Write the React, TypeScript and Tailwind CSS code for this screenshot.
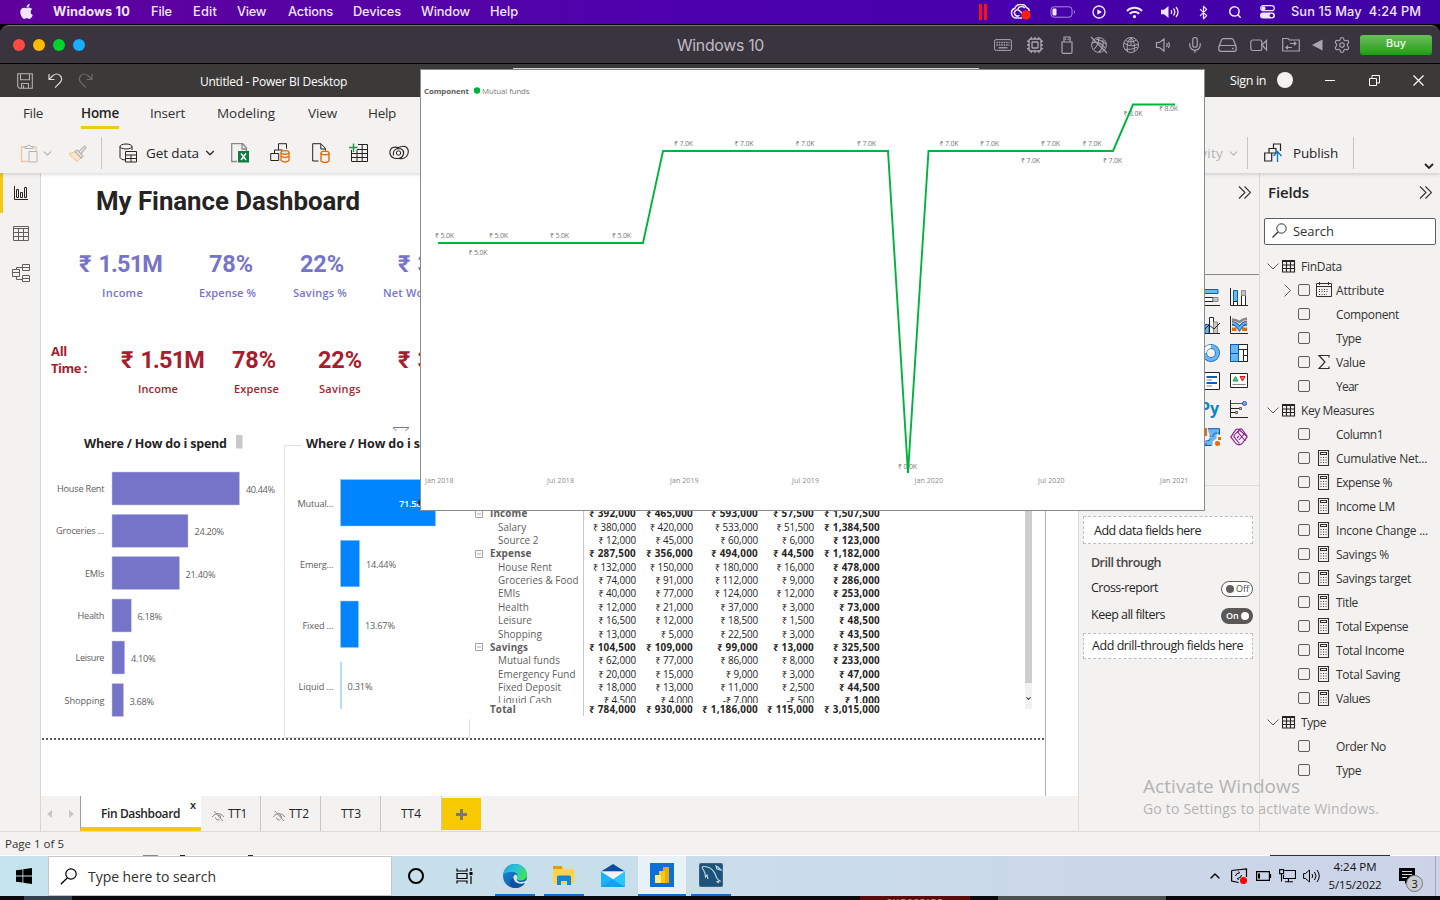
import { useLayoutEffect, useRef, useState, type ReactNode } from "react";
import { FaApple, FaWifi } from "react-icons/fa";
import { Bluetooth, ChevronDown, ChevronUp, Search, Cpu, Mic, Settings } from "lucide-react";

/** Single-line label that spreads its letters to fill the given width. */
function Fit({ w, children, className = "" }: { w: number; children: string; className?: string }) {
  const ref = useRef<HTMLSpanElement>(null);
  const [spacing, setSpacing] = useState(0);
  useLayoutEffect(() => {
    const el = ref.current;
    if (!el) return;
    el.style.letterSpacing = "0px";
    setSpacing((w - el.getBoundingClientRect().width) / children.length);
  }, [w, children]);
  return (
    <span ref={ref} className={"inline-block shrink-0 whitespace-pre " + className} style={{ letterSpacing: spacing + "px" }}>
      {children}
    </span>
  );
}

function Ico({ w, h, className = "", children }: { w: number; h: number; className?: string; children: ReactNode }) {
  return (
    <svg width={w} height={h} viewBox={`0 0 ${w} ${h}`} fill="none" stroke="currentColor" className={"shrink-0 " + className}>
      {children}
    </svg>
  );
}

/* ---------- macOS chrome ---------- */

function MacMenuBar() {
  return (
    <div className="flex h-6 items-center bg-linear-to-r from-[#5f009c] via-[#4c00ae] to-[#3f00a4] font-['Inter',sans-serif] text-[12.800px] font-medium text-[#efe6f8]">
      <FaApple className="mb-px ml-[18px] size-[17px]" />
      <Fit w={77} className="ml-[18px] font-bold">Windows 10</Fit>
      <Fit w={21} className="ml-[21px]">File</Fit>
      <Fit w={24} className="ml-[21px]">Edit</Fit>
      <Fit w={29} className="ml-[20px]">View</Fit>
      <Fit w={45} className="ml-[22px]">Actions</Fit>
      <Fit w={48} className="ml-[20px]">Devices</Fit>
      <Fit w={49} className="ml-[20px]">Window</Fit>
      <Fit w={28} className="ml-[20px]">Help</Fit>
      <div className="ml-auto flex items-center pr-[19px]">
        <div className="flex w-[26px] justify-center gap-[2px]">
          <i className="h-4 w-[3px] bg-[#ff1010]" />
          <i className="h-4 w-[3px] bg-[#ff1010]" />
        </div>
        <div className="flex w-[50px] justify-center">
          <Ico w={22} h={16}>
            <path d="M12 14H6.500A5 5 0 0 1 4.800 4.300 6.500 6.500 0 0 1 16.500 3.500Q19 4.500 19.500 7" strokeWidth="1.500" />
            <path d="M9.500 11.200A3 3 0 1 1 9.200 6.500l4.300 4M7.800 5.200a4 4 0 0 1 7-1.200" strokeWidth="1.500" />
            <circle cx="16" cy="11" r="4.700" fill="#ff2010" stroke="none" />
          </Ico>
        </div>
        <div className="flex w-[34px] justify-center">
          <Ico w={26} h={12}>
            <rect x="1" y=".8" width="21" height="10.400" rx="3" stroke="#a58ad6" />
            <rect x="2.500" y="2.400" width="4" height="7.200" rx="1" fill="currentColor" stroke="none" />
            <path d="M24 4.500q1.500 1.500 0 3" stroke="#a58ad6" />
          </Ico>
        </div>
        <div className="flex w-[38px] justify-center">
          <Ico w={14} h={14}>
            <circle cx="7" cy="7" r="6" strokeWidth="1.400" />
            <path d="M5.300 4.200v5.600L10 7z" fill="currentColor" stroke="none" />
          </Ico>
        </div>
        <div className="flex w-[32px] justify-center"><FaWifi className="h-[13px] w-[17px]" /></div>
        <div className="flex w-[40px] justify-center">
          <Ico w={20} h={14}>
            <path d="M1 4.800h3L8.500 1v12L4 9.200H1z" fill="currentColor" stroke="none" />
            <path d="M11 5q1.400 2 0 4M13.500 3.500q2.600 3.500 0 7M16 2q4 5 0 10" strokeWidth="1.300" />
          </Ico>
        </div>
        <div className="flex w-[26px] justify-center"><Bluetooth className="size-[15px]" strokeWidth={2} /></div>
        <div className="flex w-[38px] justify-center"><Search className="size-[14px]" strokeWidth={2.600} /></div>
        <div className="flex w-[26px] justify-center">
          <Ico w={15} h={14}>
            <rect x=".7" y=".7" width="13.600" height="5" rx="2.500" strokeWidth="1.200" />
            <circle cx="3.500" cy="3.200" r="2" fill="currentColor" stroke="none" />
            <rect x="0" y="7.500" width="15" height="6" rx="3" fill="currentColor" stroke="none" />
            <circle cx="11.500" cy="10.500" r="1.800" fill="#4300a8" stroke="none" />
          </Ico>
        </div>
        <Fit w={130} className="ml-[11px]">{"Sun 15 May  4:24 PM"}</Fit>
      </div>
    </div>
  );
}

function VmTitleBar() {
  return (
    <div className="bg-black py-px">
      <div className="flex h-[38px] items-center rounded-t-[9px] border-t border-[#77727c] bg-[#3a343f] text-[#aaa4ae]">
        <div className="ml-[13px] flex w-[646px] gap-2">
          <i className="size-3 rounded-full bg-[#ff4a43]" />
          <i className="size-3 rounded-full bg-[#ffb900]" />
          <i className="size-3 rounded-full bg-[#00d32b]" />
          <i className="size-3 rounded-full bg-[#19adff]" />
        </div>
        <Fit w={87} className="mt-[2px] ml-[18px] font-['Inter',sans-serif] text-[15.800px] text-[#c0bcc3]">Windows 10</Fit>
        <div className="ml-auto flex items-center pr-2">
          <div className="flex w-8 justify-center">
            <Ico w={18} h={12}>
              <rect x=".6" y=".6" width="16.800" height="10.800" rx="1.500" />
              <path d="M2.500 3.500h13M2.500 6h13" strokeDasharray="1.500 .9" strokeWidth="1.300" /><path d="M4.500 8.800h9" strokeWidth="1.300" />
            </Ico>
          </div>
          <div className="flex w-8 justify-center"><Cpu className="size-[18px]" strokeWidth={1.800} /></div>
          <div className="flex w-8 justify-center">
            <Ico w={12} h={18}>
              <path d="M3 6V1h6v5M1 6h10v10q0 1.300-1.300 1.300H2.300Q1 17.300 1 16zM4.700 2.500v1.500M7.300 2.500v1.500" strokeWidth="1.200" />
            </Ico>
          </div>
          <div className="flex w-8 justify-center">
            <Ico w={18} h={18}>
              <circle cx="9" cy="9" r="7.400" />
              <path d="M1 1l16 16M4 13Q8 10 9 2M9 16q5-4 4-12M2 7q7-3 13 5M6 3q7 2 10 5" strokeWidth="1.100" />
            </Ico>
          </div>
          <div className="flex w-8 justify-center">
            <Ico w={18} h={18}>
              <circle cx="9" cy="9" r="7.500" />
              <path d="M9 1.500Q4 6 5.500 15.500M9 1.500Q14 7 12 16M9 1.500V9M2 7q7 5 14.500 1M3 13.500Q10 14 15.500 11M3.500 4.500Q9 7.500 14.500 4" strokeWidth="1" />
            </Ico>
          </div>
          <div className="flex w-8 justify-center">
            <Ico w={16} h={14}>
              <path d="M1.500 4.500H4.500L9 1v12L4.500 9.500h-3zM11.500 5q1.500 2 0 4M13.500 4q1.500 3 0 6" strokeWidth="1.200" />
            </Ico>
          </div>
          <div className="flex w-8 justify-center"><Mic className="size-[18px]" strokeWidth={1.600} /></div>
          <div className="flex w-8 justify-center">
            <Ico w={19} h={14}>
              <path d="M1 8.500L3.500 2Q4 .700 5.500.700h8q1.500 0 2 1.300L18 8.500" strokeWidth="1.200" />
              <rect x=".8" y="7.500" width="17.400" height="5.800" rx="2" strokeWidth="1.200" /><path d="M14 10.500h1.500" strokeWidth="1.500" />
            </Ico>
          </div>
          <div className="flex w-8 justify-center">
            <Ico w={18} h={14}>
              <rect x=".8" y="2" width="11" height="10.500" rx="2" strokeWidth="1.200" />
              <path d="M12 7l4.500-4.500v9.500z" strokeWidth="1.200" />
            </Ico>
          </div>
          <div className="flex w-8 justify-center">
            <Ico w={18} h={15}>
              <path d="M.7 13V1.500h5.500l1.300 1.500h9.800v11H.7z" strokeWidth="1.200" />
              <path d="M8 6.500h5.500M12 4.700l2 1.800-2 1.800M10 10.500H4.500M6 8.700l-2 1.800 2 1.800" strokeWidth="1.200" />
            </Ico>
          </div>
          <div className="flex w-5 justify-center">
            <Ico w={11} h={12}><path d="M10.500 .5v11L0 6z" fill="currentColor" stroke="none" /></Ico>
          </div>
          <div className="flex w-[30px] justify-center"><Settings className="size-[18px]" strokeWidth={1.500} /></div>
          <div className="ml-[3px] flex h-5 w-[72px] items-center justify-center rounded-[3px] bg-linear-to-b from-[#69bf59] to-[#1a9d0c] pb-[3px] font-['Inter',sans-serif] text-[11px] font-medium text-[#eefbe9]">Buy</div>
        </div>
      </div>
    </div>
  );
}

/* ---------- Power BI window ---------- */

function WindowTitle() {
  return (
    <div className="flex h-[33px] items-center bg-[#3b3a39] text-[12px] text-white">
      <Ico w={16} h={16} className="ml-[17px] text-[#b5b3b2]">
        <path d="M.7.700h14.600v14.600H2.500L.7 13.500zM3.500.700v6h9v-6M4.500 15v-4.500h7V15M6.500 12.500V15" strokeWidth="1.100" />
      </Ico>
      <Ico w={15} h={16} className="ml-[15px] text-[#d8d6d5]">
        <path d="M1 1v5.500h5.500M1.200 6.200L5 2.500q4-3 7 0t.5 6.500L7 14.700" strokeWidth="1.200" />
      </Ico>
      <Ico w={15} h={16} className="ml-[15px] text-[#6b6a69]">
        <path d="M14 1v5.500H8.500M13.800 6.200L10 2.500q-4-3-7 0T2.500 9L8 14.700" strokeWidth="1.200" />
      </Ico>
      <Fit w={147} className="mt-[2px] ml-[107px]">Untitled - Power BI Desktop</Fit>
      <div className="ml-auto flex items-center">
        <Fit w={36} className="mt-px mr-[11px] text-[12.500px]">Sign in</Fit>
        <i className="-mt-px size-4 rounded-full bg-[#f3f2f1]" />
        <i className="ml-8 h-px w-[10px] bg-white" />
        <Ico w={11} h={11} className="ml-[34px]"><path d="M.5 3.500h7v7h-7zM3 3V.500h7.500V8H8" /></Ico>
        <Ico w={11} h={11} className="mr-[16px] ml-[33px]"><path d="M.5.500l10 10M10.500.500l-10 10" strokeWidth="1.200" /></Ico>
      </div>
    </div>
  );
}

function Ribbon() {
  return (
    <div className="relative z-10 h-[76px] bg-[#f3f2f1] shadow-[0_1px_4px_rgba(0,0,0,0.18)]">
      <div className="flex h-8 items-center text-[13.500px] text-[#323130]">
        <Fit w={20} className="ml-[23px]">File</Fit>
        <div className="ml-[38px] flex h-8 items-center border-b-[3px] border-[#f2c811] pt-[3px] font-semibold text-[#252423]"><Fit w={38}>Home</Fit></div>
        <Fit w={35} className="ml-[31px]">Insert</Fit>
        <Fit w={58} className="ml-[32px]">Modeling</Fit>
        <Fit w={29} className="ml-[33px]">View</Fit>
        <Fit w={28} className="ml-[31px]">Help</Fit>
      </div>
      <div className="flex h-[44px] items-center pt-1 text-[13.500px] text-[#252423]">
        <Ico w={18} h={19} className="ml-[20px] text-[#b5b3b2]">
          <path d="M5 3H1.500v14.500H8M13 3h3v4" stroke="#f0c69a" strokeWidth="1.300" />
          <path d="M5 4.500V2.500h2Q9-.500 11 2.500h2v2zM9 7.500h8v10.500H9z" fill="#f3f2f1" />
        </Ico>
        <ChevronDown className="ml-[3px] size-[13px] text-[#b5b3b2]" strokeWidth={2} />
        <Ico w={19} h={17} className="ml-[14px] text-[#b5b3b2]">
          <path d="M1 8.500l6-1.500 6 6-4 3.500Q5 14 1 8.500z" fill="#fbe3cb" stroke="#f0c69a" />
          <path d="M7 6.500l2-1.500 6 6-1.500 2zM11 6.500L16.500 1 18 2.500 13 8.500" fill="#f3f2f1" strokeWidth="1.200" />
        </Ico>
        <i className="ml-[14px] h-8 w-px bg-[#c8c6c4]" />
        <Ico w={18} h={20} className="ml-[17px]">
          <ellipse cx="7" cy="3.500" rx="6" ry="2.500" />
          <path d="M1 3.500v11Q2 17 6 17M13 3.500V7M6.500 8.500h11v10.500h-11zM6.500 12h11M6.500 15.500h11M12 12v7" />
        </Ico>
        <Fit w={53} className="ml-[9px]">Get data</Fit>
        <ChevronDown className="ml-[4px] size-[14px]" strokeWidth={2} />
        <Ico w={18} h={20} className="ml-[14px] text-[#8a8886]">
          <path d="M6 18.500H.7V.700h11L15.500 5v3M11 1v5h4.500" strokeWidth="1.300" />
          <path d="M7 8h11v11.500H7z" fill="#107c41" stroke="none" />
          <path d="M10 10.500l5 6.500M15 10.500l-5 6.500" stroke="#fff" strokeWidth="1.500" />
        </Ico>
        <Ico w={20} h={20} className="ml-[21px]">
          <path d="M8.500 7V.700h8v5M.7 10.500h8v7h-8zM4.500 10.500v-3.500h8" />
          <ellipse cx="15" cy="9.500" rx="4" ry="1.800" fill="#fbe3cb" stroke="#e66c00" strokeWidth="1.300" />
          <path d="M11 9.500v8q4 3 8 0v-8M11 13q4 3 8 0" stroke="#e66c00" strokeWidth="1.300" />
        </Ico>
        <Ico w={18} h={20} className="ml-[22px]">
          <path d="M6.500 18H.7V.700H9L13.500 5.500v2M8.800 1v5h4.700" />
          <ellipse cx="13" cy="10" rx="4" ry="1.800" fill="#fff" stroke="#e66c00" strokeWidth="1.400" />
          <path d="M9 10v8q4 3 8 0v-8" stroke="#e66c00" strokeWidth="1.400" />
        </Ico>
        <Ico w={20} h={20} className="ml-[19px]">
          <path d="M2.500 7v11.500h16V1.500H9M8 6.500h10.500M2.500 10.500h16M2.500 14.500h16M8 7v11.500M13.200 1.500v17" />
          <path d="M0 4.500h8.500M4.500.500V9" stroke="#159a4c" strokeWidth="1.400" />
        </Ico>
        <Ico w={20} h={18} className="ml-[20px]">
          <circle cx="9.500" cy="9" r="2.200" />
          <path d="M4.500 11.500Q3.500 5 9.500 4.500q5 0 5 4.500 0 5-5.500 5.500Q3 15 1.200 10.500 0 5 4 3.500q3-1 5.500.500M14.500 6.500Q15.500 13 10 14.500q5 1 7.500-2T19 5.500Q17.500 1.500 13 2.500 9.500 2.800 7.500 4.800" strokeWidth="1.100" />
        </Ico>
        <div className="ml-auto flex items-center">
          <Fit w={66} className="text-[#b5b3b2]">Sensitivity</Fit>
          <ChevronDown className="ml-[4px] size-[13px] text-[#b5b3b2]" strokeWidth={2} />
          <i className="ml-[7px] h-8 w-px bg-[#c8c6c4]" />
          <Ico w={19} h={20} className="ml-[16px]">
            <path d="M9.500 5V1h7v7M5 10V5.500h7V10M.7 10h7v8h-7zM7.700 10h4" strokeWidth="1.200" />
            <path d="M13.500 19V9M9.500 13l4-4.500 4 4.500" stroke="#0f7abf" strokeWidth="1.400" />
          </Ico>
          <Fit w={45} className="ml-[10px]">Publish</Fit>
          <i className="ml-[15px] h-8 w-px bg-[#c8c6c4]" />
          <Ico w={10} h={7} className="mt-[26px] mr-[6px] ml-[70px]"><path d="M1 1l4 4 4-4" strokeWidth="1.800" /></Ico>
        </div>
      </div>
    </div>
  );
}

function GridIcon({ className = "" }: { className?: string }) {
  return <Ico w={16} h={15} className={className}><path d="M.500.500h15v14H.500zM.500 2.500h15M.500 6.500h15M.500 10.500h15M5.500 2.500v12M10.500 2.500v12" /></Ico>;
}

function ViewRail() {
  return (
    <div className="flex w-[41px] shrink-0 flex-col border-r border-[#d8d6d4] bg-[#f3f2f1] text-[#605e5c]">
      <div className="flex h-10 items-center border-l-[3px] border-[#f2c811] pl-[11px] text-[#252423]">
        <Ico w={14} h={14}><path d="M.5 0v13.500H14M2.500 3.500v8h2v-8zM6.500 6.500v5h2v-5zM10.500 1.500v10h2v-10z" /></Ico>
      </div>
      <div className="flex h-10 items-center pl-[13px]"><GridIcon /></div>
      <div className="flex h-10 items-center pl-3">
        <Ico w={18} h={18}><path d="M.5 5.500h7v7h-7zM.5 8.500h7M10.500.500h7v6h-7zM10.500 3.500h7M10.500 11.500h7v6h-7zM10.500 14.500h7M4.500 5.500v-2h6M4.500 12.500v3h6" /></Ico>
      </div>
    </div>
  );
}

const spend = [
  { label: "House Rent", lx: 57, y: 472, w: 127.500, value: "40.44%", vx: 246, vw: 29 },
  { label: "Groceries ...", lx: 56, y: 514.300, w: 76, value: "24.20%", vx: 194.500, vw: 29.500 },
  { label: "EMIs", lx: 85, y: 556.500, w: 67.500, value: "21.40%", vx: 185.500, vw: 30 },
  { label: "Health", lx: 77.500, y: 599, w: 19.300, value: "6.18%", vx: 137.500, vw: 24.500 },
  { label: "Leisure", lx: 75.500, y: 641, w: 12.700, value: "4.10%", vx: 131, vw: 24.500 },
  { label: "Shopping", lx: 64.500, y: 683.500, w: 11.500, value: "3.68%", vx: 129.500, vw: 24.500 },
];

function SpendChart() {
  return (
    <svg width="243" height="314" viewBox="41 425 243 314" className="shrink-0 text-[9.200px]">
      <text x="84" y="448" textLength="143" className="fill-[#252423] text-[12.500px] font-bold">Where / How do i spend</text>
      <rect x="236" y="435" width="6.500" height="13.500" fill="#c8c8c8" />
      {spend.map((d) => (
        <g key={d.label}>
          <text x={d.lx} y={d.y + 20} textLength={104.500 - d.lx} fill="#605e5c">{d.label}</text>
          <rect x="112" y={d.y} width={d.w} height="33" fill="#7674c9" stroke="#c9c8ec" strokeWidth=".5" />
          <text x={d.vx} y={d.y + 21} textLength={d.vw} fill="#605e5c">{d.value}</text>
        </g>
      ))}
    </svg>
  );
}

const save = [
  { label: "Mutual...", lx: 297.500, y: 479.500, w: 95, value: "71.58%", vx: 399, vw: 30, fill: "#fff" },
  { label: "Emerg...", lx: 300, y: 540.300, w: 19, value: "14.44%", vx: 366, vw: 30, fill: "#605e5c" },
  { label: "Fixed ...", lx: 302.500, y: 601, w: 18, value: "13.67%", vx: 365, vw: 30, fill: "#605e5c" },
  { label: "Liquid ...", lx: 298.500, y: 662, w: 1, value: "0.31%", vx: 347.500, vw: 25, fill: "#605e5c" },
];

function SaveChart() {
  return (
    <svg width="191" height="314" viewBox="284 425 191 314" className="shrink-0 text-[9.200px]">
      <path d="M302 445.500H284.500V737.500H469.500V719" fill="none" stroke="#e1e1e1" />
      <path d="M393 427.500h16M393.500 428l3 3M408.500 428l-3 3" fill="none" stroke="#7f6d9a" />
      <text x="306" y="448" textLength="145" className="fill-[#252423] text-[12.500px] font-bold">Where / How do i spend</text>
      {save.map((d) => (
        <g key={d.label}>
          <text x={d.lx} y={d.y + 27.500} textLength={333.500 - d.lx} fill="#605e5c">{d.label}</text>
          <rect x="340.500" y={d.y} width={d.w} height="46.500" fill={d.w > 1 ? "#0085ff" : "#99ceff"} stroke="#99ceff" strokeWidth=".5" />
          <text x={d.vx} y={d.y + 27.500} textLength={d.vw} fill={d.fill} fontWeight={d.w > 90 ? 600 : 400}>{d.value}</text>
        </g>
      ))}
      <path d="M416.500 502.500l4.500-4v8z" fill="#3b3a39" />
    </svg>
  );
}

const matrix: { name: string; group?: boolean; v: string[] }[] = [
  { name: "Income", group: true, v: ["₹ 392,000", "₹ 465,000", "₹ 593,000", "₹ 57,500", "₹ 1,507,500"] },
  { name: "Salary", v: ["₹ 380,000", "₹ 420,000", "₹ 533,000", "₹ 51,500", "₹ 1,384,500"] },
  { name: "Source 2", v: ["₹ 12,000", "₹ 45,000", "₹ 60,000", "₹ 6,000", "₹ 123,000"] },
  { name: "Expense", group: true, v: ["₹ 287,500", "₹ 356,000", "₹ 494,000", "₹ 44,500", "₹ 1,182,000"] },
  { name: "House Rent", v: ["₹ 132,000", "₹ 150,000", "₹ 180,000", "₹ 16,000", "₹ 478,000"] },
  { name: "Groceries & Food", v: ["₹ 74,000", "₹ 91,000", "₹ 112,000", "₹ 9,000", "₹ 286,000"] },
  { name: "EMIs", v: ["₹ 40,000", "₹ 77,000", "₹ 124,000", "₹ 12,000", "₹ 253,000"] },
  { name: "Health", v: ["₹ 12,000", "₹ 21,000", "₹ 37,000", "₹ 3,000", "₹ 73,000"] },
  { name: "Leisure", v: ["₹ 16,500", "₹ 12,000", "₹ 18,500", "₹ 1,500", "₹ 48,500"] },
  { name: "Shopping", v: ["₹ 13,000", "₹ 5,000", "₹ 22,500", "₹ 3,000", "₹ 43,500"] },
  { name: "Savings", group: true, v: ["₹ 104,500", "₹ 109,000", "₹ 99,000", "₹ 13,000", "₹ 325,500"] },
  { name: "Mutual funds", v: ["₹ 62,000", "₹ 77,000", "₹ 86,000", "₹ 8,000", "₹ 233,000"] },
  { name: "Emergency Fund", v: ["₹ 20,000", "₹ 15,000", "₹ 9,000", "₹ 3,000", "₹ 47,000"] },
  { name: "Fixed Deposit", v: ["₹ 18,000", "₹ 13,000", "₹ 11,000", "₹ 2,500", "₹ 44,500"] },
  { name: "Liquid Cash", v: ["₹ 4,500", "₹ 4,000", "-₹ 7,000", "-₹ 500", "₹ 1,000"] },
];

function MatrixRow({ name, group, total, v }: { name: string; group?: boolean; total?: boolean; v: string[] }) {
  const strong = group || total;
  return (
    <div className="grid h-[13.380px] grid-cols-[108px_53px_57px_65px_56px_66px] items-center leading-[13px] text-[#252423]">
      <div className={"flex items-center whitespace-nowrap text-[#605e5c] " + (group ? "" : total ? "pl-[15px]" : "pl-[23px]")}>
        {group && <Ico w={8} h={8} className="mr-[7px] text-[#a6a4a2]"><path d="M.5.500h7v7h-7zM2 4h4" /></Ico>}
        <span className={strong ? "font-bold tracking-[0.150px]" : "tracking-[0.060px]"}>{name}</span>
      </div>
      {v.map((c, i) => (
        <span key={i} className={"whitespace-nowrap text-right " + (strong || i === 4 ? "font-bold tracking-[0.230px]" : "tracking-[-0.150px]")}>{c}</span>
      ))}
    </div>
  );
}

function Matrix() {
  return (
    <div className="flex w-[570px] shrink-0 pt-[82px] text-[9.900px]">
      <div className="relative w-[550px]">
        <div className="h-[196px] overflow-hidden">
          {matrix.map((r) => <MatrixRow key={r.name} {...r} />)}
        </div>
        <MatrixRow name="Total" total v={["₹ 784,000", "₹ 930,000", "₹ 1,186,000", "₹ 115,000", "₹ 3,015,000"]} />
        <i className="absolute top-0 left-[108px] h-[209px] w-px bg-[#c8c8c8]" />
      </div>
      <div className="flex h-[202px] w-[7px] flex-col items-center justify-between bg-[#f1f1f1]">
        <i className="h-[176px] w-full bg-[#cdcdcd]" />
        <ChevronDown className="mb-[7px] size-[7px] text-[#505050]" strokeWidth={4} />
      </div>
    </div>
  );
}

function Canvas() {
  return (
    <div className="flex h-[623px] bg-white">
      <div className="flex w-[1005px] flex-col border-r border-[#b3b0ad]">
        <div className="flex h-[57px] items-center font-['Roboto',sans-serif] text-[25.800px] font-bold text-[#252423]"><Fit w={264} className="ml-[55px]">My Finance Dashboard</Fit></div>
        <div className="mt-[21px] flex h-7 items-center font-['Roboto','Noto_Sans',sans-serif] text-[23.500px] font-bold text-[#7674c9]">
          <Fit w={83} className="ml-[38px] [word-spacing:3px]">₹ 1.51M</Fit>
          <Fit w={44} className="ml-[47px]">78%</Fit>
          <Fit w={44} className="ml-[47px]">22%</Fit>
          <Fit w={83} className="ml-[54px] [word-spacing:3px]">₹ 3.25M</Fit>
        </div>
        <div className="mt-[6px] flex h-4 items-center text-[11px] font-semibold text-[#7674c9]">
          <Fit w={41} className="ml-[61px]">Income</Fit>
          <Fit w={57} className="ml-[56px]">Expense %</Fit>
          <Fit w={54} className="ml-[37px]">Savings %</Fit>
          <Fit w={57} className="ml-[36px]">Net Worth</Fit>
        </div>
        <div className="mt-10 flex h-[63px] text-[#a61e2e]">
          <div className="ml-[10px] w-[70px] text-[13px] leading-[17px] font-bold"><Fit w={16} className="mt-[2px]">All</Fit><br /><Fit w={36}>Time :</Fit></div>
          <div>
            <div className="mt-[6px] flex h-7 items-center font-['Roboto','Noto_Sans',sans-serif] text-[23.500px] font-bold">
              <Fit w={83} className="[word-spacing:3px]">₹ 1.51M</Fit>
              <Fit w={44} className="ml-[28px]">78%</Fit>
              <Fit w={44} className="ml-[42px]">22%</Fit>
              <Fit w={83} className="ml-[36px] [word-spacing:3px]">₹ 3.25M</Fit>
            </div>
            <div className="mt-[6px] flex h-4 items-center text-[11px] font-semibold">
              <Fit w={40} className="ml-[17px]">Income</Fit>
              <Fit w={45} className="ml-[56px]">Expense</Fit>
              <Fit w={42} className="ml-[40px]">Savings</Fit>
            </div>
          </div>
        </div>
        <div className="mt-[21px] flex h-[313px]">
          <SpendChart />
          <SaveChart />
          <Matrix />
        </div>
        <div className="ml-px h-[2px] w-[1002px] bg-[repeating-linear-gradient(90deg,#5a5a5a_0_2px,transparent_2px_4px)]" />
      </div>
    </div>
  );
}

function HiddenEye() {
  return <Ico w={14} h={12} className="mt-1 mr-[3px] text-[#8a8886]"><path d="M1 7Q7 0 13 7M3 1l9 10M4.500 7.500a2.500 2.500 0 0 0 4 2M9.500 8a2.500 2.500 0 0 0-2-3" /></Ico>;
}

function PageTabs() {
  return (
    <div className="flex h-[35px] bg-[#f3f2f1] text-[12px] text-[#252423]">
      <div className="flex w-[39px] items-center gap-[17px] pl-[6px] text-[#c8c6c4]">
        <Ico w={5} h={8}><path d="M5 0v8L0 4z" fill="currentColor" stroke="none" /></Ico>
        <Ico w={5} h={8}><path d="M0 0v8l5-4z" fill="currentColor" stroke="none" /></Ico>
      </div>
      <div className="flex w-[121px] border-b-4 border-l border-b-[#f2c811] border-l-[#a19f9d] bg-white pt-[9px] pl-5 font-semibold">
        <Fit w={79}>Fin Dashboard</Fit>
        <span className="-mt-[8px] ml-[10px] text-[11px]">x</span>
      </div>
      <div className="flex w-[60px] items-center border-r border-[#c8c6c4] pl-[10px]"><HiddenEye /><Fit w={19}>TT1</Fit></div>
      <div className="flex w-[60px] items-center border-r border-[#c8c6c4] pl-[11px]"><HiddenEye /><Fit w={20}>TT2</Fit></div>
      <div className="flex w-[60px] items-center border-r border-[#c8c6c4] pl-5"><Fit w={20}>TT3</Fit></div>
      <div className="flex w-[61px] items-center border-r border-[#c8c6c4] pl-5"><Fit w={20}>TT4</Fit></div>
      <div className="mt-[2px] flex h-8 w-[39px] items-center justify-center bg-[#f6c900] text-[#7a7775]">
        <Ico w={11} h={11}><path d="M5.500 0v11M0 5.500h11" strokeWidth="3" /></Ico>
      </div>
    </div>
  );
}

const vizIcons: ReactNode[] = [
  <><path d="M0 1.500h16v4H0z" fill="#6cb6f0" stroke="#0a5fb5" /><path d="M0 9.500h11v4H0z" fill="#fff" /><path d="M11 9.500h5v4h-5z" fill="#c8c6c4" stroke="#8a8886" /><path d="M0 17.500h18" /></>,
  <><path d="M3.500 2.500h4v11h-4z" fill="#6cb6f0" stroke="#0a5fb5" /><path d="M3.500 13.500h4v4h-4zM11.500 7.500h4v10h-4z" fill="#fff" /><path d="M11.500 2.500h4v5h-4z" fill="#c8c6c4" stroke="#8a8886" /><path d="M.5 0v17.500H18" /></>,
  <><path d="M3 8.500h4v9H3z" fill="#6cb6f0" stroke="#0a5fb5" /><path d="M7.500 1.500h4v16h-4z" fill="#fff" /><path d="M11.500 6h4v11.500h-4z" fill="#c8c6c4" stroke="#8a8886" /><path d="M3 13l4-4 5 4 6-6M0 17.500h18" /></>,
  <><path d="M2 8h3v2H2zM2 11.500h4.500V15H2zM14 8h3v2h-3zM12 11.500h5V15h-5z" fill="#e66c00" stroke="none" /><path d="M2 3.500q4 0 7.500 2.500Q13 3 17 2.500" stroke="#8a8886" strokeWidth="2.500" /><path d="M2 7q4 0 7.500 5.500Q13 7 17 6.500" stroke="#0a5fb5" strokeWidth="3.800" /><path d="M2 7q4 0 7.500 5.500Q13 7 17 6.500" stroke="#6cb6f0" strokeWidth="1.800" /><path d="M.5 0v17.500H18" /></>,
  <><circle cx="9" cy="9" r="6.500" stroke="#0a5fb5" strokeWidth="5" /><circle cx="9" cy="9" r="6.500" stroke="#6cb6f0" strokeWidth="3.500" /><path d="M9 2.500A6.500 6.500 0 0 0 2.500 9" stroke="#fff" strokeWidth="3.500" /></>,
  <><path d="M.5.500h17v17H.5z" fill="#fff" /><path d="M.5.500h8v9h-8zM.5 9.500h8v8h-8z" fill="#6cb6f0" stroke="#0a5fb5" /><path d="M8.500.500h9v17h-9M8.500 5.500h9M13.500 5.500v12M13.500 11.500h4" /></>,
  <><path d="M0 .500h17.500v17H0z" fill="#fff" /><path d="M4.500 5H15M4.500 11H15" stroke="#0a5fb5" strokeWidth="1.800" /><path d="M4.500 8H10M4.500 14H10" stroke="#8a8886" /></>,
  <><path d="M.5 1.500h17v14H.5z" fill="#fff" /><path d="M3 9l2.500-4.500L8 9z" fill="#6fc493" stroke="#159a4c" /><path d="M10 4.500h5L12.500 9z" fill="#f26d6d" stroke="#d11" /><path d="M2.500 12.500h13" stroke="#8a8886" /></>,
  <text x="-2" y="14" fill="#0f86c5" stroke="none" className="text-[16px] font-bold">Py</text>,
  <><path d="M.5 0v17.500H18M1 8.500h8M1 12.500h5" /><path d="M1 3.500h12" stroke="#0a5fb5" /><circle cx="14.500" cy="3.500" r="2" fill="#6cb6f0" stroke="#0a5fb5" /><path d="M9.500 7.500h2v2h-2zM5.500 11.500h2v2h-2z" fill="#c8c6c4" stroke="#605e5c" /></>,
  <><path d="M0 0h5v8H0z" fill="#e66c00" stroke="none" /><path d="M5.500.500h12v6h-3v4l-4 3v4H1l5-6h3z" fill="#6cb6f0" stroke="none" /><path d="M6 .700h11.500v6M.500 17.500h9" stroke="#0a5fb5" /><path d="M4 17v-4.500h4V8h4V5h5" stroke="#0a5fb5" strokeDasharray="2 1" /><circle cx="15.500" cy="15.500" r="2.500" fill="#e66c00" stroke="none" /><path d="M16 9h3v3h-3z" fill="#e66c00" stroke="none" /></>,
  <><path d="M6 1.500q1.500-1 3 0L16.500 8q1 1 0 2l-4 5q-1.500 2-3.500 1.500-2 .5-3.500-1.500l-4-5q-1-1 0-2z" stroke="#8f1a94" strokeWidth="1.200" /><path d="M9 1.500q2-1.500 3.500.500l4.500 6M9 2l-4.500 5q-1.200 1.500 0 2.500l5 6M9 3l-1 1.500 7.500 8.500M14.500 5.500L9 12M9 8l-2 2" stroke="#8f1a94" strokeWidth="1.100" /></>,
];

function DoubleChevron() {
  return <Ico w={13} h={13} className="text-[#323130]"><path d="M1 .500l6 6-6 6M6.500.500l6 6-6 6" strokeWidth="1.100" /></Ico>;
}

function VizPane() {
  return (
    <div className="flex w-[181px] shrink-0 flex-col border-l border-[#dcdad8] text-[12.500px] text-[#252423]">
      <div className="flex h-[102px] justify-end border-b border-[#8a8886] pt-[13px] pr-[8px]"><DoubleChevron /></div>
      <div className="h-[211px] border-b border-[#dcdad8] pt-[8px]">
        <div className="ml-[123px] grid grid-cols-[28px_28px]">
          {vizIcons.map((d, i) => (
            <div key={i} className="flex h-7 items-center"><Ico w={19} h={18} className="text-[#252423]">{d}</Ico></div>
          ))}
        </div>
      </div>
      <div className="mt-[30px] ml-1 flex h-7 w-[170px] items-center border border-dashed border-[#c0bebc] bg-white pt-[2px] pl-[10px]"><Fit w={107}>Add data fields here</Fit></div>
      <div className="mt-[9px] flex h-5 items-center pl-3 font-semibold text-[#484644]"><Fit w={70}>Drill through</Fit></div>
      <div className="mt-[2px] flex h-[27px] items-center pl-3">
        <Fit w={67}>Cross-report</Fit>
        <div className="mr-[6px] ml-auto flex h-4 w-8 items-center gap-[2px] rounded-full border border-[#605e5c] bg-white pl-1 text-[9px] text-[#484644]"><i className="size-2 shrink-0 rounded-full bg-[#605e5c]" />Off</div>
      </div>
      <div className="flex h-[27px] items-center pl-3">
        <Fit w={74}>Keep all filters</Fit>
        <div className="mr-[6px] ml-auto flex h-4 w-8 items-center gap-[2px] rounded-full bg-[#5a5856] pl-[5px] text-[9px] font-semibold text-white">On<i className="size-2 shrink-0 rounded-full bg-white" /></div>
      </div>
      <div className="mt-1 ml-1 flex h-[26px] w-[170px] items-center border border-dashed border-[#c0bebc] bg-white pt-px pl-[8px]"><Fit w={151}>Add drill-through fields here</Fit></div>
    </div>
  );
}

type Kind = "table" | "date" | "plain" | "sum" | "calc";
const fields: [Kind, string, number][] = [
  ["table", "FinData", 41], ["date", "Attribute", 48], ["plain", "Component", 63], ["plain", "Type", 25], ["sum", "Value", 29], ["plain", "Year", 22],
  ["table", "Key Measures", 73], ["plain", "Column1", 47], ["calc", "Cumulative Net...", 91], ["calc", "Expense %", 56], ["calc", "Income LM", 59],
  ["calc", "Incone Change ...", 92], ["calc", "Savings %", 53], ["calc", "Savings target", 75], ["calc", "Title", 22], ["calc", "Total Expense", 72],
  ["calc", "Total Income", 68], ["calc", "Total Saving", 64], ["calc", "Values", 34], ["table", "Type", 25], ["plain", "Order No", 50], ["plain", "Type", 25],
];

function FieldIcon({ kind }: { kind: Kind }) {
  if (kind === "date") return <Ico w={16} h={16}><path d="M.5 1.500h15v13H.5zM.5 4.500h15M3.500 0v3M12.500 0v3" /><path d="M3 7.500h10M3 9.500h10M3 12.500h8" strokeDasharray="1 1.500" /></Ico>;
  if (kind === "sum") return <Ico w={16} h={16}><path d="M13 3.500V1.500H3l6 6.500-6 6.500h10v-2" strokeWidth="1.200" /></Ico>;
  if (kind === "calc") return <Ico w={12} h={16} className="mx-[2px]"><path d="M.5.500h10v15H.5zM2.500 2.500h6v2h-6z" strokeWidth="1.100" /><path d="M2.500 7.500h6.500M2.500 10h6.500M2.500 12.500h6.500" strokeDasharray="1 1.500" /></Ico>;
  return <i className="w-4" />;
}

function FieldsPane() {
  return (
    <div className="flex w-[181px] shrink-0 flex-col border-l border-[#dcdad8] text-[#323130]">
      <div className="flex h-[39px] items-center pl-2">
        <Fit w={41} className="text-[15px] font-semibold text-[#252423]">Fields</Fit>
        <div className="ml-auto pr-[8px]"><DoubleChevron /></div>
      </div>
      <div className="mt-[6px] ml-1 flex h-[27px] w-[172px] items-center rounded-[2px] border border-[#605e5c] bg-white pl-[7px] text-[13px]">
        <Ico w={15} h={15} className="-mt-[2px]"><circle cx="9.500" cy="5.500" r="4.700" /><path d="M6 9L.5 14.500" strokeWidth="1.300" /></Ico>
        <Fit w={41} className="mt-px ml-[6px]">Search</Fit>
      </div>
      <div className="mt-[9px] text-[12px]">
        {fields.map(([kind, name, w], i) =>
          kind === "table" ? (
            <div key={i} className="flex h-6 items-center pl-[7px]">
              <Ico w={12} h={7} className="text-[#605e5c]"><path d="M.5.500L6 6l5.500-5.500" /></Ico>
              <Ico w={14} h={13} className="mr-[5px] ml-[3px] text-[#252423]"><path d="M.5.500h12v11.500H.5zM.5 1.500h12M.5 5h12M.5 8.500h12M4.500 1.500v10.500M8.500 1.500v10.500" strokeWidth="1.100" /></Ico>
              <Fit w={w} className="pt-px">{name}</Fit>
            </div>
          ) : (
            <div key={i} className="flex h-6 items-center pl-6">
              <div className="w-[14px]">{kind === "date" && <Ico w={7} h={13} className="text-[#605e5c]"><path d="M.5.500l6 6-6 6" /></Ico>}</div>
              <i className="mr-[6px] size-3 rounded-[2px] border border-[#605e5c]" />
              <FieldIcon kind={kind} />
              <Fit w={w} className="ml-1 pt-px">{name}</Fit>
            </div>
          ),
        )}
      </div>
    </div>
  );
}

/* ---------- Tooltip chart ---------- */

const dataLabels: [string, number, number][] = [
  ["₹ 5.0K", 435, 238], ["₹ 5.0K", 489, 238], ["₹ 5.0K", 550, 238], ["₹ 5.0K", 612, 238], ["₹ 5.0K", 468.500, 255],
  ["₹ 7.0K", 674, 146], ["₹ 7.0K", 734.500, 146], ["₹ 7.0K", 795.500, 146], ["₹ 7.0K", 857, 146],
  ["₹ 7.0K", 939.500, 146], ["₹ 7.0K", 980, 146], ["₹ 7.0K", 1041, 146], ["₹ 7.0K", 1082.500, 146],
  ["₹ 7.0K", 1021, 163], ["₹ 7.0K", 1103, 163], ["₹ 8.0K", 1123.500, 116], ["₹ 8.0K", 1159, 111], ["₹ 0.0K", 898, 469],
];
const ticks: [string, number, number][] = [
  ["Jan 2018", 425, 28.500], ["Jul 2018", 547, 27], ["Jan 2019", 670, 28.500], ["Jul 2019", 792, 27], ["Jan 2020", 914.500, 28.500], ["Jul 2020", 1038, 26.500], ["Jan 2021", 1160, 28.500],
];

function TrendTooltip() {
  return (
    <div className="absolute top-[69px] left-[420px] z-20 h-[442px] w-[785px] border border-[#8b8b8b] bg-white">
      <svg width="783" height="440" viewBox="421 70 783 440" className="block text-[7px]">
        <text x="424" y="94" textLength="45" className="fill-[#605e5c] text-[7.800px] font-bold">Component</text>
        <circle cx="477" cy="90.500" r="3.200" fill="#00b33c" />
        <text x="482" y="94" textLength="47.500" className="fill-[#777] text-[7.800px]">Mutual funds</text>
        {dataLabels.map(([t, x, y], i) => <text key={i} x={x} y={y} textLength="19" fill="#777">{t}</text>)}
        {ticks.map(([t, x, w]) => <text key={t} x={x} y="483" textLength={w} fill="#8a8a8a">{t}</text>)}
        <path d="M438 243H643L663 151H888L908 473L928.500 151H1113L1133 104.500H1175" fill="none" stroke="#00b33c" strokeWidth="1.900" />
      </svg>
    </div>
  );
}

/* ---------- Windows taskbar ---------- */

function Taskbar() {
  return (
    <div className="flex h-10 items-stretch bg-linear-to-r from-[#c5e4ee] via-[#c9ddea] to-[#ccd3e8] text-black">
      <div className="flex w-12 items-center pl-4">
        <svg width="16" height="16" viewBox="0 0 16 16"><path d="M0 2.300l6.500-.9v6.200H0zM7.300 1.300L16 0v7.600H7.300zM0 8.400h6.500v6.200L0 13.700zM7.300 8.400H16V16l-8.700-1.300z" /></svg>
      </div>
      <div className="flex w-[344px] items-center border border-[#c8c6c4] bg-white pl-[11px] text-[14px] text-[#323130]">
        <Ico w={17} h={17} className="text-black"><circle cx="11" cy="6" r="5.200" strokeWidth="1.200" /><path d="M7.200 10L.8 16.200" strokeWidth="1.300" /></Ico>
        <Fit w={128} className="mt-px ml-[11px]">Type here to search</Fit>
      </div>
      <div className="flex w-12 items-center justify-center"><i className="size-4 rounded-full border-[2.500px] border-black" /></div>
      <div className="flex w-12 items-center justify-center">
        <Ico w={17} h={16}><path d="M1 .500V3h10V.500M1 15.500V13h10v2.500M1 5.500h10v5H1zM15 0v3M15 8v8" strokeWidth="1.200" /><path d="M13.500 4h3v3h-3z" fill="currentColor" stroke="none" /></Ico>
      </div>
      <div className="flex w-[55px] items-center pl-[7px]">
        <div className="flex h-10 w-10 items-center justify-center border-b-2 border-[#0a6fd6] pt-[2px]">
          <svg width="24" height="24" viewBox="0 0 24 24">
            <defs>
              <linearGradient id="edgeTop" x1="0" x2="1" y1="0" y2=".6"><stop offset="0" stopColor="#1b9de2" /><stop offset=".5" stopColor="#2cc3d2" /><stop offset="1" stopColor="#3fe35a" /></linearGradient>
              <linearGradient id="edgeLow" x1="0" x2="1" y1="0" y2="1"><stop offset="0" stopColor="#1b8bdc" /><stop offset="1" stopColor="#0c4a9c" /></linearGradient>
            </defs>
            <circle cx="12" cy="12" r="12" fill="url(#edgeLow)" />
            <path d="M0 11.500C.5 5 5.500 0 12 0c7 0 12 5 12 10.500 0 4-3 6-6.500 6-3 0-4-1-3.500-2 2-3 0-6.500-4.500-6.500C5 8 1 9 0 11.500z" fill="url(#edgeTop)" />
            <path d="M12 10.500c3 .5 3 2.500 2 4-1 1.500 1 3.500 4 3.500 2.500 0 4.500-1 5.500-2l.5 3-3 1.500c-4 .5-9-.5-10.500-4.500-.8-2.500 0-4.500 1.500-5.500z" fill="#d0e6f2" />
            <path d="M10.500 14c.5 4.500 5.500 7 11.500 5-2 3.500-6 5-10 5C6 24 5 17 10.500 14z" fill="#12509f" />
          </svg>
        </div>
      </div>
      <div className="flex w-[49px] items-center pl-[1px]">
        <div className="flex h-10 w-10 items-center justify-center border-b-2 border-[#0a6fd6] pt-[2px]">
          <svg width="22" height="20" viewBox="0 0 22 20"><path d="M0 1h9l2 2h10.500v15H0z" fill="#fdd447" /><path d="M0 0h9v3H0z" fill="#e19c12" /><path d="M4 11q0-1.500 1.500-1.500h11Q18 9.500 18 11v8h-4v-4H8v4H4z" fill="#1583d8" /></svg>
        </div>
      </div>
      <div className="flex w-[46px] items-center pl-[9px]">
        <svg width="24" height="24" viewBox="0 0 24 24"><path d="M0 7.500L12 0l12 7.500z" fill="#0a4ea3" /><path d="M0 7.500h24v8H0z" fill="#f2f2f2" /><path d="M0 7.500L24 23H0z" fill="#1cb0f6" /><path d="M24 7.500V23H0l12-7.500z" fill="#12a0f0" /><path d="M24 7.500L12 15.500 24 23z" fill="#28c7fa" /></svg>
      </div>
      <div className="flex w-12 items-center justify-center border-b-2 border-[#0a6fd6] bg-[#e7f1f8]">
        <svg width="24" height="24" viewBox="0 0 24 24"><path d="M0 0h24v24H0z" fill="#0a6fd6" /><path d="M13 4h6v16h-6z" fill="#e8ad0c" /><path d="M9 8h6v12H9z" fill="#f6c91a" /><path d="M5 12h6v8H5z" fill="#fdeb86" /></svg>
      </div>
      <div className="ml-[5px] flex w-10 items-center justify-center border-b-2 border-[#0a6fd6]">
        <svg width="24" height="24" viewBox="0 0 24 24" fill="none" stroke="#c6dbea"><rect width="24" height="24" rx="2.500" fill="#1d5378" stroke="#6c8493" strokeWidth=".8" /><path d="M4.500 7q-3-4 1-3.500Q14 4 17 13q.5 3 4 5l-3 .5 2 1.500M4.500 7q2 3 2 7l1.500-2 1 4M17 3l1 3 4 1-3-3z" strokeWidth="1.100" /></svg>
      </div>
      <div className="ml-auto flex items-center">
        <ChevronUp className="size-4" strokeWidth={2} />
        <Ico w={17} h={16} className="ml-[8px]"><path d="M.6 2.500L15.500 1v8M.6 2.500v10.500l7 1.500" strokeWidth="1.200" /><path d="M4.500 8q.5-3 4-3l-1-1.500M10.500 7q0 3-4 3.500l1 1.500" /><circle cx="12.500" cy="12.500" r="3.500" fill="#f00" stroke="none" /></Ico>
        <Ico w={16} h={10} className="ml-[8px]"><path d="M.6.600h12.800v8.800H.6zM14.500 3v4" strokeWidth="1.200" /><path d="M2 2.500h2v5H2z" fill="currentColor" stroke="none" /></Ico>
        <Ico w={17} h={14} className="ml-[7px]"><path d="M5.500 1.500h11v8H4.500V6M.6.600h4v4h-4zM2.500 4.600v8M9.500 9.500v3M6 12.700h8" strokeWidth="1.100" /></Ico>
        <Ico w={17} h={14} className="ml-[7px]"><path d="M.6 4.500h2L6.500 1v12L2.600 9.500h-2zM9 5q1.500 2 0 4M11.500 3q3 4 0 8M14 1q4.500 6 0 12" /></Ico>
        <div className="ml-[8px] flex w-[54px] flex-col items-center text-[11.500px] leading-[18px] text-[#111]"><Fit w={43}>4:24 PM</Fit><Fit w={53}>5/15/2022</Fit></div>
        <Ico w={26} h={25} className="mt-2 ml-[17px]">
          <path d="M0 0h16v13H9l-3 3v-3H0z" fill="#000" stroke="none" /><path d="M3 3.500h10M3 6.500h10M3 9.500h5" stroke="#ccd3e8" />
          <circle cx="15.500" cy="15.500" r="8" fill="#c9cbd0" stroke="#777" />
          <text x="12.600" y="19.500" fill="#111" stroke="none" className="text-[11px]">3</text>
        </Ico>
        <i className="ml-[10px] h-10 w-px bg-[#a3a9bb]" />
        <i className="w-1" />
      </div>
    </div>
  );
}

export default function App() {
  return (
    <div className="relative h-[900px] w-[1440px] overflow-hidden bg-black font-['Open_Sans','Noto_Sans',sans-serif]">
      <MacMenuBar />
      <VmTitleBar />
      <WindowTitle />
      <Ribbon />
      <div className="flex h-[658px] bg-[#f3f2f1]">
        <ViewRail />
        <div className="w-[1037px] shrink-0">
          <Canvas />
          <PageTabs />
        </div>
        <VizPane />
        <FieldsPane />
      </div>
      <div className="relative flex h-[25px] items-center border-t border-b border-t-[#dcdad8] border-b-white bg-[#f3f2f1] pl-[5px] text-[11.500px] text-[#323130]">
        <Fit w={59}>Page 1 of 5</Fit>
        <i className="absolute -bottom-px left-[143px] h-px w-[15px] bg-[#8a8886]" />
        <i className="absolute -bottom-px left-[180px] h-px w-[5px] bg-[#252423]" />
        <i className="absolute -bottom-px left-[248px] h-px w-[5px] bg-[#252423]" />
        <i className="absolute -bottom-px left-[1270px] h-px w-[120px] bg-[#323130]" />
      </div>
      <Taskbar />
      <div className="flex h-1 overflow-hidden bg-[#0a0a0c]">
        <i className="ml-[24px] h-1 w-[48px] bg-[#33404e]" />
        <div className="ml-[788px] h-1 w-[110px] overflow-hidden bg-[#5a0b0b] text-center text-[9px] leading-[12px] font-bold tracking-widest text-[#a88]">SUBSCRIBE</div>
        <i className="ml-[28px] h-1 w-[168px] bg-[#4a504e]" />
      </div>

      <TrendTooltip />
      <i className="absolute top-[68px] left-[513px] z-20 h-px w-[466px] bg-[#d8d6d4]" />
      <div className="absolute top-[773px] left-[1143px] flex flex-col items-start text-[#b4b2b1]">
        <Fit w={157} className="text-[19px] leading-[26px]">Activate Windows</Fit>
        <Fit w={236} className="text-[14px] leading-[20px]">Go to Settings to activate Windows.</Fit>
      </div>
    </div>
  );
}
